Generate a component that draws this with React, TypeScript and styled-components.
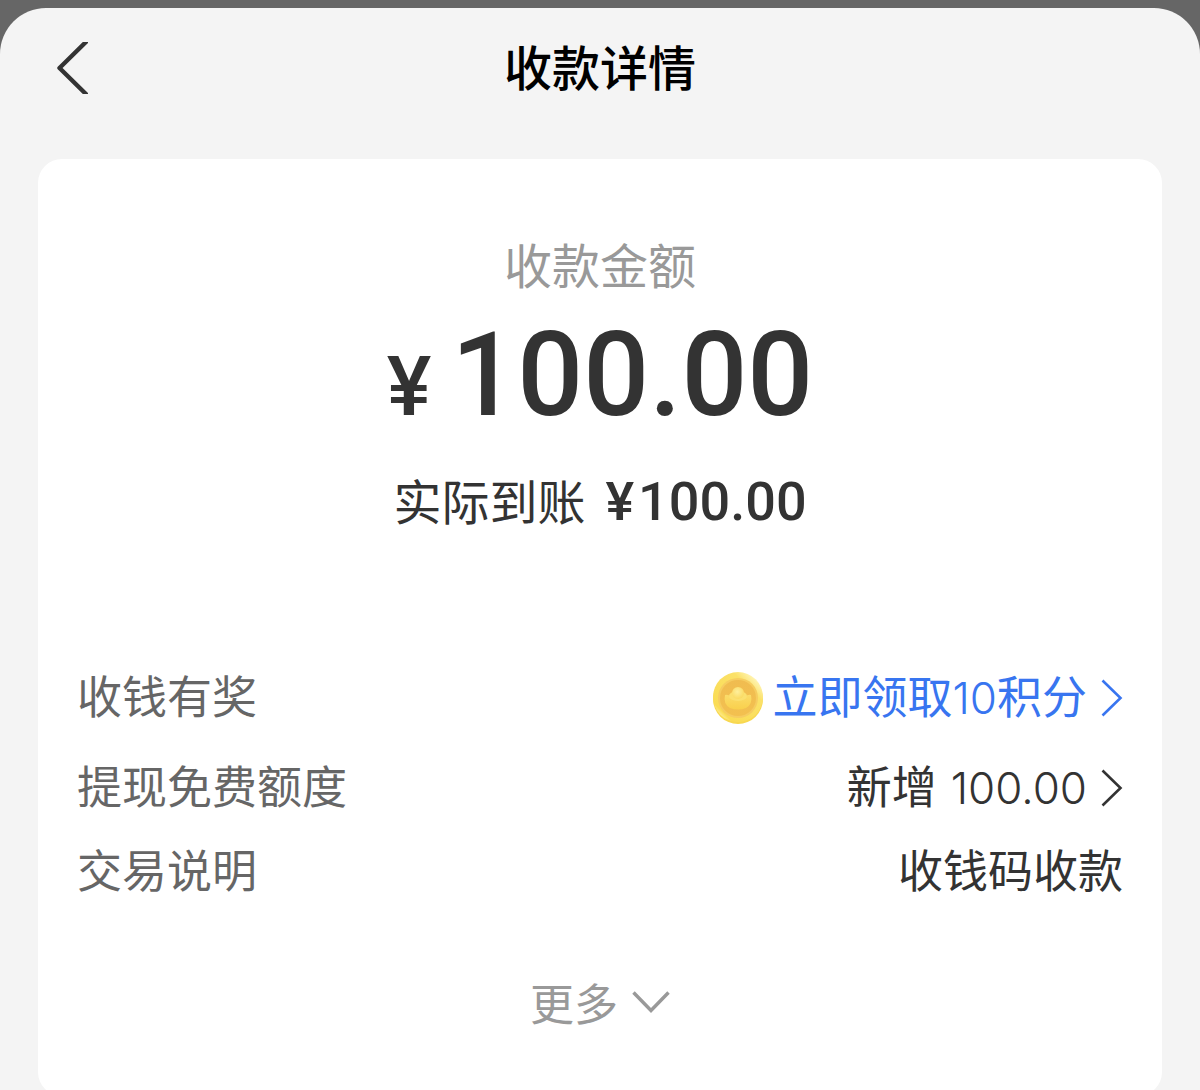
import React from "react";
import styled, { createGlobalStyle } from "styled-components";

const cjk = `"Noto Sans CJK SC", sans-serif`;

const GlobalStyle = createGlobalStyle`
  * { box-sizing: border-box; }
  body { margin: 0; background: #666; font-family: ${cjk}; }
`;

const Screen = styled.div`
  height: 100vh;
  padding-top: 8px;
  overflow-y: auto;
  scrollbar-width: none;
  background: #666;
`;

const Sheet = styled.div`
  min-height: 100%;
  padding-bottom: 40px;
  border-radius: 46px 46px 0 0;
  background: #f4f4f4;
`;

const Header = styled.header`
  display: grid;
  grid-template-columns: 1fr auto 1fr;
  align-items: center;
  height: 120px;
  padding: 0 56px;
`;

const BackButton = styled.button`
  justify-self: start;
  display: flex;
  padding: 0;
  border: 0;
  background: none;
  color: #333;
  cursor: pointer;
`;

const Title = styled.h1`
  margin: 0;
  padding-bottom: 6px;
  font-size: 48px;
  font-weight: 500;
  line-height: 72px;
  color: #000;
`;

const Card = styled.main`
  margin: 31px 38px 0;
  padding: 68px 39px 58px;
  border-radius: 24px;
  background: #fff;
`;

const Summary = styled.section`
  display: flex;
  flex-direction: column;
  align-items: center;
  color: #333;
`;

const Caption = styled.h2`
  margin: 0;
  font-size: 48px;
  font-weight: 400;
  line-height: 72px;
  color: #999;
`;

const Amount = styled.p`
  display: flex;
  align-items: baseline;
  gap: 20px;
  margin: 4px 0 0;
  font-family: Roboto, ${cjk};
  font-size: 116px;
  font-weight: 500;
  line-height: 144px;
`;

const Currency = styled.span`
  font-size: 84px;
  line-height: 84px;
`;

const Net = styled.p`
  display: flex;
  align-items: baseline;
  gap: 20px;
  margin: 16px 0 0;
  font-size: 48px;
  font-weight: 400;
  line-height: 72px;
`;

const NetValue = styled.span`
  display: flex;
  gap: 4px;
  font-family: Roboto, ${cjk};
  font-size: 54px;
  font-weight: 500;
`;

const Details = styled.dl`
  display: flex;
  flex-direction: column;
  gap: 24px;
  margin: 124px 0 0;
  font-size: 45px;
  font-weight: 400;
  line-height: 54px;
`;

const Row = styled.div`
  display: flex;
  align-items: center;
  justify-content: space-between;
`;

const Term = styled.dt`
  padding-bottom: 6px;
  color: #666;
`;

const Value = styled.dd`
  margin: 0;
  color: #333;
`;

const RowLink = styled.a<{ $accent?: boolean }>`
  display: flex;
  align-items: center;
  gap: 14px;
  min-height: ${(p) => (p.$accent ? "72px" : "60px")};
  color: ${(p) => (p.$accent ? "#3875f0" : "#333")};
  text-decoration: none;
`;

const Reward = styled.span`
  display: flex;
  align-items: center;
  gap: 8px;
`;

const ValueText = styled.span`
  display: block;
  padding-bottom: 6px;
`;

const Quota = styled(ValueText)`
  display: flex;
  align-items: baseline;
  gap: 14px;
`;

const Digits = styled.span`
  font-family: Inter, ${cjk};
  font-size: 44px;
  font-weight: 350;
  line-height: 44px;
`;

const MoreButton = styled.button`
  display: flex;
  align-items: center;
  gap: 14px;
  margin: 64px auto 0;
  padding: 0;
  border: 0;
  background: none;
  color: #999;
  font: 400 44px/72px ${cjk};
  cursor: pointer;
`;

const BackIcon = () => (
  <svg width="32" height="52" viewBox="0 0 32 52" fill="none" aria-hidden="true">
    <path d="M32 -2 L3.5 26 L32 54" stroke="currentColor" strokeWidth="4.4" strokeLinejoin="round" />
  </svg>
);

const NextIcon = () => (
  <svg width="22" height="38" viewBox="0 0 22 38" fill="none" aria-hidden="true">
    <path d="M1.5 1.5 L19.5 19 L1.5 36.5" stroke="currentColor" strokeWidth="2.6" />
  </svg>
);

const DownIcon = () => (
  <svg width="38" height="24" viewBox="0 0 38 24" fill="none" aria-hidden="true">
    <path d="M1.5 2.5 L19 20.5 L36.5 2.5" stroke="currentColor" strokeWidth="3.4" />
  </svg>
);

const CoinIcon = () => (
  <svg width="52" height="54" viewBox="0 0 52 54" aria-hidden="true">
    <defs>
      <linearGradient id="rim" x1="1" y1="0" x2="0" y2="1">
        <stop offset="0" stopColor="#fae062" />
        <stop offset="0.15" stopColor="#fff3b0" />
        <stop offset="0.3" stopColor="#fbe168" />
        <stop offset="0.8" stopColor="#fadc55" />
        <stop offset="0.88" stopColor="#fff0a0" />
        <stop offset="1" stopColor="#f8d848" />
      </linearGradient>
      <linearGradient id="face" x1="0" y1="0" x2="0" y2="1">
        <stop offset="0" stopColor="#f0bc50" />
        <stop offset="1" stopColor="#f3c04f" />
      </linearGradient>
      <linearGradient id="ingot" x1="0" y1="0" x2="0" y2="1">
        <stop offset="0" stopColor="#fbdc6a" />
        <stop offset="1" stopColor="#f9d04c" />
      </linearGradient>
      <radialGradient id="dome" cx="0.45" cy="0.4" r="0.6">
        <stop offset="0" stopColor="#feef9c" />
        <stop offset="1" stopColor="#fada62" />
      </radialGradient>
    </defs>
    <circle cx="26" cy="28" r="25" fill="#f8d850" />
    <circle cx="26" cy="26" r="25" fill="url(#rim)" />
    <circle cx="26" cy="27" r="20" fill="#f6cc60" />
    <circle cx="26" cy="27" r="18" fill="url(#face)" />
    <path
      d="M13 24 Q16 23 19 26 H33 Q36 23 39 24 Q41 33 34 37 Q26 40 18 37 Q11 33 13 24Z"
      fill="url(#ingot)"
    />
    <ellipse cx="26" cy="25" rx="9" ry="5" fill="#fbe070" />
    <circle cx="26" cy="22" r="6" fill="url(#dome)" />
  </svg>
);

export default function App() {
  return (
    <Screen>
      <GlobalStyle />
      <Sheet>
        <Header>
          <BackButton type="button" aria-label="返回">
            <BackIcon />
          </BackButton>
          <Title>收款详情</Title>
        </Header>
        <Card>
          <Summary>
            <Caption>收款金额</Caption>
            <Amount>
              <Currency>¥</Currency>
              <span>100.00</span>
            </Amount>
            <Net>
              <span>实际到账</span>
              <NetValue>
                <span>¥</span>
                <span>100.00</span>
              </NetValue>
            </Net>
          </Summary>
          <Details>
            <Row>
              <Term>收钱有奖</Term>
              <Value>
                <RowLink href="#points" $accent>
                  <Reward>
                    <CoinIcon />
                    <ValueText>
                      立即领取<Digits>10</Digits>积分
                    </ValueText>
                  </Reward>
                  <NextIcon />
                </RowLink>
              </Value>
            </Row>
            <Row>
              <Term>提现免费额度</Term>
              <Value>
                <RowLink href="#quota">
                  <Quota>
                    <span>新增</span>
                    <Digits>100.00</Digits>
                  </Quota>
                  <NextIcon />
                </RowLink>
              </Value>
            </Row>
            <Row>
              <Term>交易说明</Term>
              <Value>
                <ValueText>收钱码收款</ValueText>
              </Value>
            </Row>
          </Details>
          <MoreButton type="button">
            更多
            <DownIcon />
          </MoreButton>
        </Card>
      </Sheet>
    </Screen>
  );
}
